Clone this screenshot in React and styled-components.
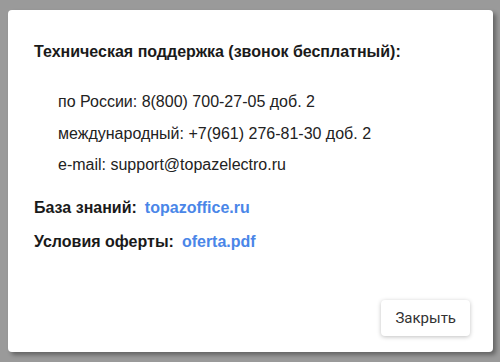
import React from "react";
import styled, { createGlobalStyle } from "styled-components";

const Global = createGlobalStyle`
  html, body { margin: 0; padding: 0; }
  body {
    width: 500px;
    height: 362px;
    overflow: hidden;
    background: #9a9a9a;
    font-family: "Liberation Sans", Arial, sans-serif;
  }
`;

const Backdrop = styled.div`
  box-sizing: border-box;
  width: 500px;
  height: 362px;
  padding: 10px 7px 10px 8px;
  background: #9a9a9a;
`;

const Dialog = styled.div`
  box-sizing: border-box;
  width: 485px;
  height: 342px;
  background: #fff;
  border-radius: 4px;
  box-shadow: 3px 3px 4px rgba(0, 0, 0, 0.35);
  display: flex;
  flex-direction: column;
  padding: 32px 23px 16px 26px;
`;

const Heading = styled.div`
  font-size: 16px;
  font-weight: bold;
  color: #1a1a1a;
  line-height: 20px;
`;

const ContactList = styled.div`
  display: flex;
  flex-direction: column;
  gap: 13.5px;
  padding: 31px 0 0 24px;
`;

const ContactRow = styled.div`
  font-size: 16px;
  color: #222;
  line-height: 18px;
`;

const LinkList = styled.div`
  display: flex;
  flex-direction: column;
  gap: 16px;
  padding-top: 25px;
`;

const LinkRow = styled.div`
  font-size: 16px;
  font-weight: bold;
  color: #1a1a1a;
  line-height: 18px;
`;

const Link = styled.a`
  color: #4a86e8;
  text-decoration: none;
  margin-left: 8px;
`;

const Footer = styled.div`
  margin-top: auto;
  display: flex;
  justify-content: flex-end;
`;

const Button = styled.button`
  font-family: Roboto, "Liberation Sans", sans-serif;
  font-size: 15px;
  color: #333;
  background: #fff;
  border: none;
  border-radius: 4px;
  box-shadow: 0 1px 4px rgba(0, 0, 0, 0.25);
  height: 36px;
  padding: 0 14px;
  cursor: pointer;
`;

export default function App() {
  return (
    <>
      <Global />
      <Backdrop>
        <Dialog>
          <Heading>Техническая поддержка (звонок бесплатный):</Heading>
          <ContactList>
            <ContactRow>по России: 8(800) 700-27-05 доб. 2</ContactRow>
            <ContactRow>международный: +7(961) 276-81-30 доб. 2</ContactRow>
            <ContactRow>e-mail: support@topazelectro.ru</ContactRow>
          </ContactList>
          <LinkList>
            <LinkRow>
              База знаний:<Link href="#">topazoffice.ru</Link>
            </LinkRow>
            <LinkRow>
              Условия оферты:<Link href="#">oferta.pdf</Link>
            </LinkRow>
          </LinkList>
          <Footer>
            <Button>Закрыть</Button>
          </Footer>
        </Dialog>
      </Backdrop>
    </>
  );
}
